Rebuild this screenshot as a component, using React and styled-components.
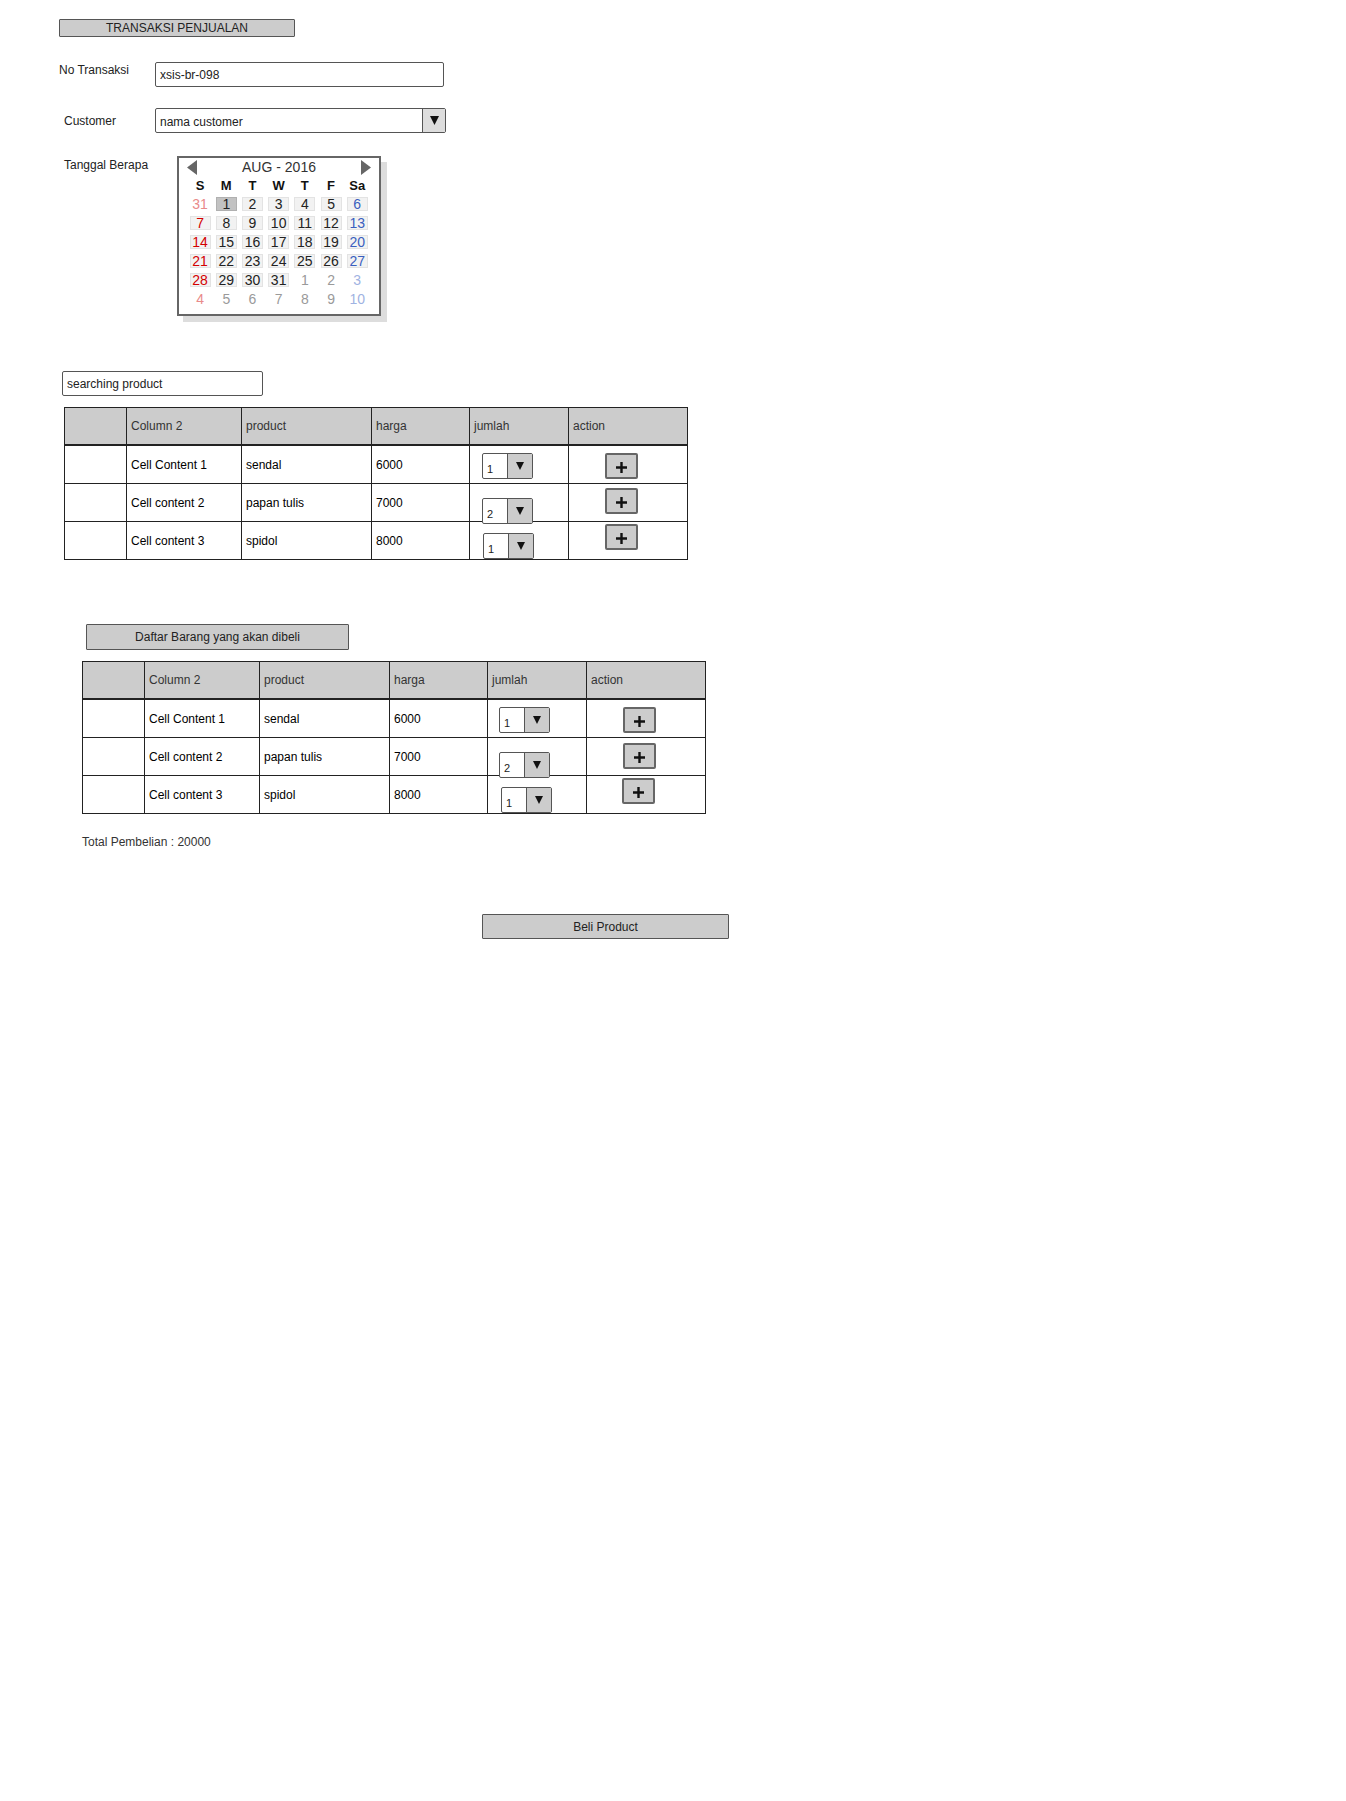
import React from 'react';
import styled, { createGlobalStyle } from 'styled-components';

const GlobalStyle = createGlobalStyle`
  * { box-sizing: border-box; }
  body {
    margin: 0;
    background: #fff;
    color: #222;
    font-family: "Liberation Sans", Arial, sans-serif;
    font-size: 12px;
  }
`;

const Page = styled.div`
  width: 1346px;
  min-height: 1801px;
  display: flex;
  flex-direction: column;
  align-items: flex-start;
`;

const Banner = styled.div`
  margin: ${p => p.top}px 0 0 ${p => p.left}px;
  width: ${p => p.w}px;
  height: ${p => p.h}px;
  display: flex;
  align-items: center;
  justify-content: center;
  background: #ccc;
  border: 1.5px solid #555;
  border-radius: 1px;
  color: #222;
  font-size: 12px;
`;

const FormRow = styled.div`
  display: flex;
  align-items: ${p => p.align || 'center'};
  margin: ${p => p.top}px 0 0 ${p => p.left}px;
`;

const Label = styled.div`
  width: ${p => p.w}px;
  margin-top: ${p => p.shift || 0}px;
  line-height: 14px;
  color: #222;
`;

const TextBox = styled.div`
  width: ${p => p.w}px;
  height: 25px;
  display: flex;
  align-items: center;
  padding-left: 4px;
  border: 1.5px solid #555;
  border-radius: 2px;
  background: #fff;
  color: #222;
`;

const SelectBox = styled.div`
  width: 291px;
  height: 25px;
  display: flex;
  border: 1.5px solid #555;
  border-radius: 2px;
  background: #fff;
`;

const SelectText = styled.div`
  flex: 1;
  display: flex;
  align-items: center;
  padding: 2px 0 0 4px;
  color: #222;
`;

const SelectArrow = styled.div`
  width: 23px;
  display: flex;
  align-items: center;
  justify-content: center;
  background: #ddd;
  border-left: 1.5px solid #555;
`;

const Calendar = styled.div`
  width: 204px;
  height: 160px;
  border: 2px solid #666;
  background: #fff;
  box-shadow: 6px 6px 0 #ddd;
  display: flex;
  flex-direction: column;
`;

const CalHead = styled.div`
  height: 18px;
  display: flex;
  align-items: center;
  justify-content: space-between;
  padding: 0 8px;
  color: #333;
  font-size: 14px;
`;

const CalGrid = styled.div`
  display: grid;
  grid-template-columns: repeat(7, 26.2px);
  grid-template-rows: 18px;
  grid-auto-rows: 19px;
  padding-left: 8px;
  justify-items: center;
  align-items: center;
`;

const DayName = styled.div`
  font-weight: bold;
  font-size: 13px;
  color: #111;
`;

const tones = {
  norm: '#222',
  sun: '#d40000',
  sat: '#3a5fbf',
  fadeNorm: '#9a9a9a',
  fadeSun: '#e98a8a',
  fadeSat: '#9fb3e2',
};

const DateCell = styled.div`
  width: 21px;
  height: 14px;
  display: flex;
  align-items: center;
  justify-content: center;
  font-size: 14px;
  color: ${p => tones[p.tone]};
  background: ${p => (p.selected ? '#c2c2c2' : p.boxed ? '#f2f2f2' : 'transparent')};
  border: 1px solid ${p => (p.selected ? '#b0b0b0' : p.boxed ? '#e3e3e3' : 'transparent')};
`;

const SearchBox = styled(TextBox)`
  margin: ${p => p.top}px 0 0 ${p => p.left}px;
  padding-left: 4px;
`;

const Table = styled.div`
  margin: ${p => p.top}px 0 0 ${p => p.left}px;
  display: grid;
  grid-template-columns: 62px 115px 130px 98px 99px 119px;
  grid-template-rows: repeat(4, 38px);
  border-top: 1px solid #222;
  border-left: 1px solid #222;
`;

const HeadCell = styled.div`
  display: flex;
  align-items: center;
  padding-left: 4px;
  background: #ccc;
  color: #333;
  border-right: 1px solid #222;
  border-bottom: 2px solid #222;
`;

const Cell = styled.div`
  display: flex;
  align-items: center;
  padding-left: 4px;
  color: #000;
  border-right: 1px solid #222;
  border-bottom: 1px solid #222;
`;

const SlotCell = styled.div`
  border-right: 1px solid #222;
  border-bottom: 1px solid #222;
  position: relative;
`;

const QtySelect = styled.div`
  margin: ${p => p.shift}px 0 0 ${p => p.indent}px;
  width: 51px;
  height: 26px;
  display: flex;
  border: 1.5px solid #555;
  border-radius: 2px;
  background: #fff;
  position: relative;
  z-index: 1;
`;

const QtyValue = styled.div`
  flex: 1;
  display: flex;
  align-items: center;
  padding: 5px 0 0 4px;
  font-size: 11px;
  color: #222;
`;

const QtyArrow = styled.div`
  width: 25px;
  display: flex;
  align-items: center;
  justify-content: center;
  background: #ccc;
  border-left: 1.5px solid #555;
`;

const PlusButton = styled.div`
  margin: ${p => p.shift}px 0 0 ${p => p.indent}px;
  width: 33px;
  height: 26px;
  display: flex;
  align-items: center;
  justify-content: center;
  padding-top: 2px;
  background: #ccc;
  border: 2px solid #666;
  border-radius: 2px;
`;

const Total = styled.div`
  margin: ${p => p.top}px 0 0 ${p => p.left}px;
  line-height: 14px;
  color: #333;
`;

const Triangle = ({ dir, w, h, color = '#666' }) => {
  const pts = {
    left: `${w},0 0,${h / 2} ${w},${h}`,
    right: `0,0 ${w},${h / 2} 0,${h}`,
    down: `0,0 ${w},0 ${w / 2},${h}`,
  }[dir];
  return (
    <svg width={w} height={h} viewBox={`0 0 ${w} ${h}`}>
      <polygon points={pts} fill={color} />
    </svg>
  );
};

const PlusIcon = () => (
  <svg width="13" height="13" viewBox="0 0 13 13">
    <path d="M6.5 1v11M1 6.5h11" stroke="#111" strokeWidth="2.4" />
  </svg>
);

const weeks = [
  [31, 1, 2, 3, 4, 5, 6],
  [7, 8, 9, 10, 11, 12, 13],
  [14, 15, 16, 17, 18, 19, 20],
  [21, 22, 23, 24, 25, 26, 27],
  [28, 29, 30, 31, 1, 2, 3],
  [4, 5, 6, 7, 8, 9, 10],
];

function dateTone(day, inMonth) {
  if (day === 0) return inMonth ? 'sun' : 'fadeSun';
  if (day === 6) return inMonth ? 'sat' : 'fadeSat';
  return inMonth ? 'norm' : 'fadeNorm';
}

function MonthCalendar() {
  return (
    <Calendar>
      <CalHead>
        <Triangle dir="left" w={10} h={15} />
        <span>AUG - 2016</span>
        <Triangle dir="right" w={10} h={15} />
      </CalHead>
      <CalGrid>
        {['S', 'M', 'T', 'W', 'T', 'F', 'Sa'].map((d, i) => (
          <DayName key={'d' + i}>{d}</DayName>
        ))}
        {weeks.map((week, w) =>
          week.map((n, d) => {
            const inMonth = !((w === 0 && n > 7) || (w >= 4 && n < 15));
            return (
              <DateCell
                key={w + '-' + d}
                tone={dateTone(d, inMonth)}
                boxed={inMonth}
                selected={w === 0 && n === 1}
              >
                {n}
              </DateCell>
            );
          })
        )}
      </CalGrid>
    </Calendar>
  );
}

const items = [
  { name: 'Cell Content 1', product: 'sendal', price: '6000', qty: '1' },
  { name: 'Cell content 2', product: 'papan tulis', price: '7000', qty: '2' },
  { name: 'Cell content 3', product: 'spidol', price: '8000', qty: '1' },
];

function ProductTable({ left, top, offsets }) {
  return (
    <Table left={left} top={top}>
      <HeadCell />
      <HeadCell>Column 2</HeadCell>
      <HeadCell>product</HeadCell>
      <HeadCell>harga</HeadCell>
      <HeadCell>jumlah</HeadCell>
      <HeadCell>action</HeadCell>
      {items.map((it, i) => {
        const o = offsets[i];
        return (
          <React.Fragment key={it.name}>
            <Cell />
            <Cell>{it.name}</Cell>
            <Cell>{it.product}</Cell>
            <Cell>{it.price}</Cell>
            <SlotCell>
              <QtySelect shift={o.sel[0]} indent={o.sel[1]}>
                <QtyValue>{it.qty}</QtyValue>
                <QtyArrow>
                  <Triangle dir="down" w={8} h={8} color="#111" />
                </QtyArrow>
              </QtySelect>
            </SlotCell>
            <SlotCell>
              <PlusButton shift={o.plus[0]} indent={o.plus[1]}>
                <PlusIcon />
              </PlusButton>
            </SlotCell>
          </React.Fragment>
        );
      })}
    </Table>
  );
}

const searchOffsets = [
  { sel: [7, 12], plus: [7, 36] },
  { sel: [14, 12], plus: [4, 36] },
  { sel: [11, 13], plus: [2, 36] },
];

const cartOffsets = [
  { sel: [7, 11], plus: [7, 36] },
  { sel: [14, 11], plus: [5, 36] },
  { sel: [11, 13], plus: [2, 35] },
];

export default function App() {
  return (
    <Page>
      <GlobalStyle />
      <Banner top={19} left={59} w={236} h={18}>TRANSAKSI PENJUALAN</Banner>

      <FormRow top={25} left={59} align="flex-start">
        <Label w={96} shift={1}>No Transaksi</Label>
        <TextBox w={289}>xsis-br-098</TextBox>
      </FormRow>

      <FormRow top={21} left={64}>
        <Label w={91}>Customer</Label>
        <SelectBox>
          <SelectText>nama customer</SelectText>
          <SelectArrow>
            <Triangle dir="down" w={9} h={9} color="#111" />
          </SelectArrow>
        </SelectBox>
      </FormRow>

      <FormRow top={23} left={64} align="flex-start">
        <Label w={113} shift={2}>Tanggal Berapa</Label>
        <MonthCalendar />
      </FormRow>

      <SearchBox top={55} left={62} w={201}>searching product</SearchBox>

      <ProductTable top={11} left={64} offsets={searchOffsets} />

      <Banner top={64} left={86} w={263} h={26}>Daftar Barang yang akan dibeli</Banner>

      <ProductTable top={11} left={82} offsets={cartOffsets} />

      <Total top={21} left={82}>Total Pembelian : 20000</Total>

      <Banner top={65} left={482} w={247} h={25}>Beli Product</Banner>
    </Page>
  );
}
